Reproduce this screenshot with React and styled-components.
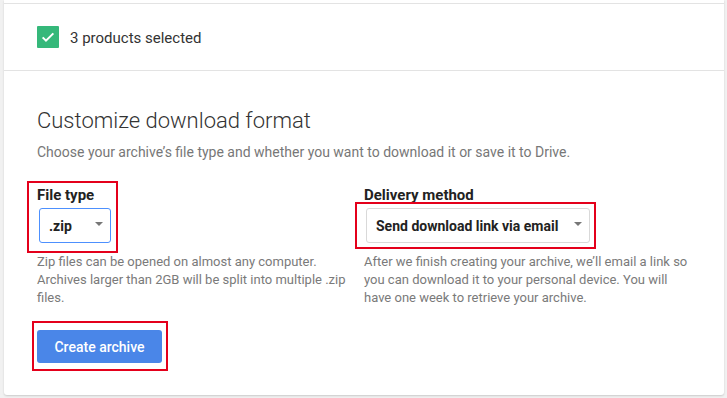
import React from "react";
import styled, { createGlobalStyle } from "styled-components";

const GlobalStyle = createGlobalStyle`
  html, body {
    margin: 0;
    background: #f1f1f1;
    font-family: Roboto, "Liberation Sans", sans-serif;
  }
`;

const Page = styled.div`
  padding: 0 3px 3px 4px;
`;

const Card = styled.div`
  background: #fff;
  border-radius: 0 0 3px 3px;
  box-shadow: 0 1px 2px rgba(0, 0, 0, 0.16);
  padding-top: 3px;
`;

const SelectionRow = styled.div`
  height: 66px;
  border-top: 1px solid #e3e3e3;
  border-bottom: 1px solid #e3e3e3;
  display: flex;
  align-items: center;
  gap: 11px;
  padding-left: 33px;
`;

const Check = styled.span`
  width: 22px;
  height: 22px;
  background: #35b87a;
  border-radius: 1px;
  display: flex;
  align-items: center;
  justify-content: center;
`;

const SelectedText = styled.span`
  font-size: 15px;
  color: #333;
  margin-top: 2px;
`;

const Body = styled.div`
  padding: 36px 33px 32px 33px;
`;

const Heading = styled.h2`
  margin: 0;
  font-size: 22px;
  line-height: 28px;
  font-weight: 300;
  color: #333;
`;

const Subtitle = styled.p`
  margin: 7px 0 0;
  font-size: 14px;
  line-height: 20px;
  color: #777;
`;

const Columns = styled.div`
  display: grid;
  grid-template-columns: 325px 325px;
  column-gap: 2px;
  margin-top: 23px;
`;

const Field = styled.div`
  display: flex;
  flex-direction: column;
  align-items: flex-start;
`;

const Label = styled.div`
  font-size: 15px;
  line-height: 20px;
  font-weight: 700;
  color: #222;
`;

const Marked = styled.div`
  position: relative;
  display: inline-flex;
  flex-direction: column;
  align-items: flex-start;
  margin-top: ${({ $mt }) => $mt || 0}px;
  &::after {
    content: "";
    position: absolute;
    top: ${({ $t }) => -$t}px;
    right: ${({ $r }) => -$r}px;
    bottom: ${({ $b }) => -$b}px;
    left: ${({ $l }) => -$l}px;
    border: 2px solid #e4001b;
    pointer-events: none;
  }
`;

const Select = styled.div`
  margin: ${({ $mt }) => $mt || 0}px 0 0 2px;
  min-width: ${({ $minWidth }) => $minWidth || 0}px;
  height: 35px;
  box-sizing: border-box;
  border: 1px solid ${({ $focused }) => ($focused ? "#4d90fe" : "#d9d9d9")};
  border-radius: 3px;
  display: flex;
  align-items: center;
  justify-content: space-between;
  gap: 16px;
  padding: 0 7px 0 9px;
  font-size: 14px;
  font-weight: 700;
  color: #222;
  background: #fff;
`;

const Arrow = styled.span`
  width: 0;
  height: 0;
  border-left: 4px solid transparent;
  border-right: 4px solid transparent;
  border-top: 4px solid #777;
  margin-bottom: 3px;
`;

const Help = styled.p`
  margin: 10px 0 0;
  font-size: 13px;
  line-height: 18px;
  color: #7a7a7a;
`;

const Button = styled.button`
  width: 125px;
  height: 33px;
  border: none;
  border-radius: 3px;
  background: #4a86e8;
  color: #fff;
  font-family: Roboto, "Liberation Sans", sans-serif;
  font-size: 14px;
  font-weight: 500;
  cursor: pointer;
`;

const ButtonRow = styled.div`
  margin-top: 23px;
`;

const App = () => {
  return (
    <Page>
      <GlobalStyle />
      <Card>
        <SelectionRow>
          <Check>
            <svg width="16" height="16" viewBox="0 0 24 24">
              <path d="M4 12.5l5 5L20 6.5" fill="none" stroke="#fff" strokeWidth="3" />
            </svg>
          </Check>
          <SelectedText>3 products selected</SelectedText>
        </SelectionRow>
        <Body>
          <Heading>Customize download format</Heading>
          <Subtitle>
            Choose your archive’s file type and whether you want to download it or save it to Drive.
          </Subtitle>
          <Columns>
            <Field>
              <Marked $t={4} $r={7} $b={10} $l={10}>
                <Label>File type</Label>
                <Select $focused $mt={3} $minWidth={72}>
                  .zip
                  <Arrow />
                </Select>
              </Marked>
              <Help>
                Zip files can be opened on almost any computer. Archives larger than 2GB will be
                split into multiple .zip files.
              </Help>
            </Field>
            <Field>
              <Label>Delivery method</Label>
              <Marked $t={6} $r={6} $b={6} $l={9} $mt={3}>
                <Select>
                  Send download link via email
                  <Arrow />
                </Select>
              </Marked>
              <Help>
                After we finish creating your archive, we’ll email a link so you can download it to
                your personal device. You will have one week to retrieve your archive.
              </Help>
            </Field>
          </Columns>
          <ButtonRow>
            <Marked $t={9} $r={6} $b={8} $l={5}>
              <Button>Create archive</Button>
            </Marked>
          </ButtonRow>
        </Body>
      </Card>
    </Page>
  );
};

export default App;
